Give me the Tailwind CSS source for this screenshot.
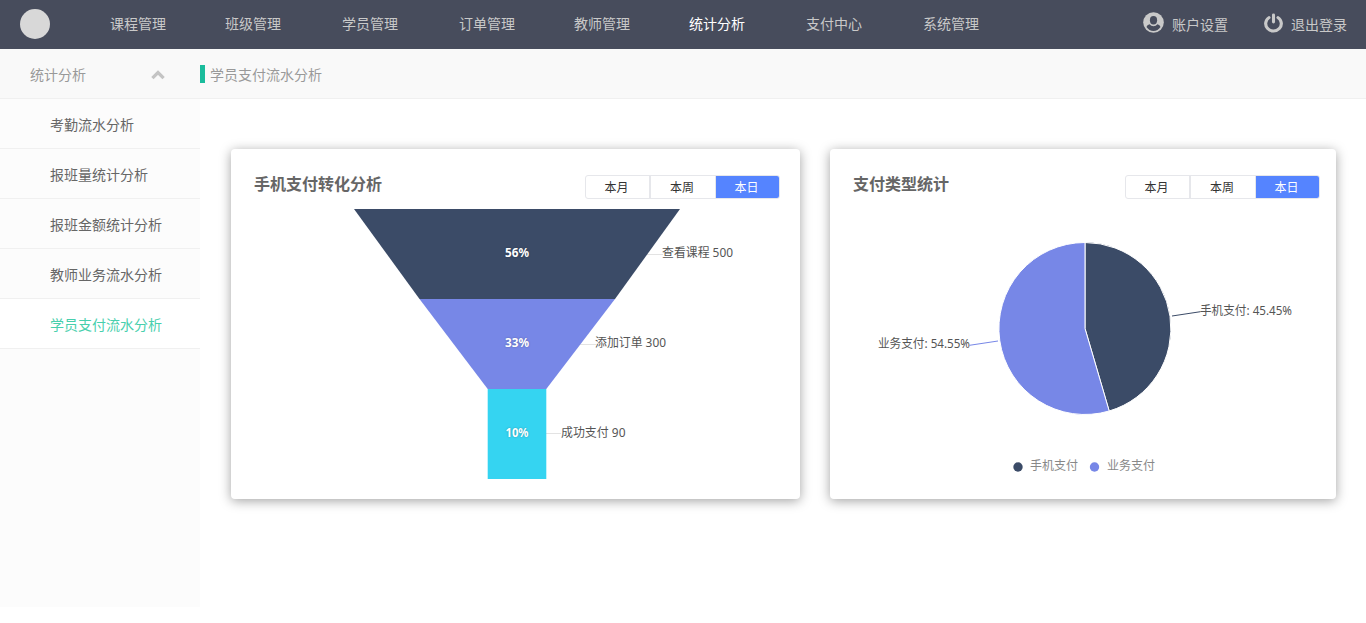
<!DOCTYPE html>
<html lang="zh-CN">
<head>
<meta charset="utf-8">
<title>学员支付流水分析</title>
<script src="https://cdn.jsdelivr.net/npm/@tailwindcss/browser@4"></script>
</head>
<body class="h-[623px] overflow-hidden bg-white font-['Noto_Sans','Noto_Sans_CJK_SC',sans-serif] text-sm text-[#666]">
<header class="flex h-[49px] items-center bg-[#474c5c] text-[#c9c9c9]">
  <div class="mb-px ml-5 size-[30px] rounded-full bg-[#d8d8d8]"></div>
  <nav class="ml-[60px] flex flex-1 pb-[2px] leading-[20px] whitespace-nowrap">
    <a class="w-[115px]">课程管理</a>
    <a class="w-[117px]">班级管理</a>
    <a class="w-[117px]">学员管理</a>
    <a class="w-[115px]">订单管理</a>
    <a class="w-[115px]">教师管理</a>
    <a class="w-[117px] text-white">统计分析</a>
    <a class="w-[117px]">支付中心</a>
    <a>系统管理</a>
  </nav>
  <a class="mr-[36px] flex items-center gap-2">
    <svg class="-mt-[4px] size-[21px]" viewBox="0 0 21 21">
      <circle cx="10.500" cy="10.500" r="10.300" fill="#c9c9c9"/>
      <ellipse cx="10.500" cy="8.300" rx="3.600" ry="4.200" fill="#474c5c"/>
      <path d="M6.600 12.200c1 1.300 2.300 2 3.900 2s2.900-.7 3.900-2c1.700.5 2.700 1.500 3.100 2.900a8.300 8.300 0 0 1-14 0c.4-1.400 1.400-2.400 3.100-2.900z" fill="#474c5c"/>
    </svg>
    <span class="leading-5">账户设置</span>
  </a>
  <a class="mr-[19px] flex items-center gap-2">
    <svg class="-mt-[4px] h-[20px] w-[19px]" viewBox="0 0 18 20" preserveAspectRatio="none" fill="none" stroke="#c9c9c9" stroke-linecap="round">
      <path d="M9 2v7" stroke-width="2.900"/>
      <path d="M4.700 4.600a7.400 7.400 0 1 0 8.600 0" stroke-width="3"/>
    </svg>
    <span class="leading-5">退出登录</span>
  </a>
</header>

<div class="flex h-[50px] items-center border-b border-[#f0f0f0] bg-[#f9f9f9] leading-5 text-[#999]">
  <div class="flex w-[200px] items-center justify-between pt-[2px] pr-[35px] pl-[30px]">
    <span>统计分析</span>
    <svg class="h-[10px] w-[14px]" viewBox="0 0 14 10"><path d="M1.400 8.200 7 2.600l5.600 5.600" fill="none" stroke="#c4c4c4" stroke-width="3.300"/></svg>
  </div>
  <span class="h-[18px] w-[5px] bg-[#1abc9c]"></span>
  <span class="ml-[5px] pt-[2px]">学员支付流水分析</span>
</div>

<div class="flex">
  <aside class="h-[508px] w-[200px] bg-[#fcfcfc] leading-5">
    <a class="flex h-[50px] items-center border-b border-[#f0f0f0] pt-[3px] pl-[50px]">考勤流水分析</a>
    <a class="flex h-[50px] items-center border-b border-[#f0f0f0] pt-[3px] pl-[50px]">报班量统计分析</a>
    <a class="flex h-[50px] items-center border-b border-[#f0f0f0] pt-[3px] pl-[50px]">报班金额统计分析</a>
    <a class="flex h-[50px] items-center border-b border-[#f0f0f0] pt-[3px] pl-[50px]">教师业务流水分析</a>
    <a class="flex h-[50px] items-center border-b border-[#f0f0f0] bg-white pt-[3px] pl-[50px] text-[#48cfad]">学员支付流水分析</a>
  </aside>

  <main class="mt-[50px] ml-[31px] flex gap-[30px]">
    <section class="h-[350px] w-[569px] rounded bg-white shadow-[0_2px_12px_rgba(0,0,0,0.37)]">
      <div class="flex h-[60px] items-start justify-between pr-5 pl-[23px]">
        <h2 class="mt-[23px] text-base leading-6 font-bold">手机支付转化分析</h2>
        <div class="mt-[26px] flex h-6 w-[195px] rounded-[3px] border border-[#e6e7eb] text-xs text-[#333]">
          <button class="w-[65px] border-r-2 border-[#e6e7eb] pt-px pr-[2px]">本月</button>
          <button class="w-[65px] border-r border-[#e6e7eb] pt-px pr-[2px]">本周</button>
          <button class="flex-1 rounded-r-[2px] bg-[#5584ff] pt-px pr-[2px] text-white">本日</button>
        </div>
      </div>
      <svg class="block h-[290px] w-[569px]" viewBox="231 209 569 290" font-size="12" fill="#555">
        <path d="M640 254.500h23M573 344.500h23M546 433.500h15" stroke="#e3e3e3"/>
        <path d="M354 209H680L615 299H419.500z" fill="#3b4b67"/>
        <path d="M419.500 299H615L546.300 389H487.700z" fill="#7787e7"/>
        <path d="M487.700 389h58.600v90h-58.600z" fill="#35d4f1"/>
        <g fill="#fff" font-weight="bold" text-anchor="middle" style="text-shadow:0 0 2px rgba(0,0,0,.3)">
          <text x="517" y="257" textLength="24" lengthAdjust="spacingAndGlyphs">56%</text>
          <text x="517" y="347" textLength="24" lengthAdjust="spacingAndGlyphs">33%</text>
          <text x="517" y="437" textLength="23" lengthAdjust="spacingAndGlyphs">10%</text>
        </g>
        <text x="662" y="257" textLength="71" lengthAdjust="spacingAndGlyphs">查看课程 500</text>
        <text x="595" y="347" textLength="71" lengthAdjust="spacingAndGlyphs">添加订单 300</text>
        <text x="561" y="437" textLength="64.500" lengthAdjust="spacingAndGlyphs">成功支付 90</text>
      </svg>
    </section>

    <section class="h-[350px] w-[506px] rounded bg-white shadow-[0_2px_12px_rgba(0,0,0,0.37)]">
      <div class="flex h-[60px] items-start justify-between pr-4 pl-[23px]">
        <h2 class="mt-[23px] text-base leading-6 font-bold">支付类型统计</h2>
        <div class="mt-[26px] flex h-6 w-[195px] rounded-[3px] border border-[#e6e7eb] text-xs text-[#333]">
          <button class="w-[65px] border-r-2 border-[#e6e7eb] pt-px pr-[2px]">本月</button>
          <button class="w-[65px] border-r border-[#e6e7eb] pt-px pr-[2px]">本周</button>
          <button class="flex-1 rounded-r-[2px] bg-[#5584ff] pt-px pr-[2px] text-white">本日</button>
        </div>
      </div>
      <svg class="block h-[290px] w-[506px]" viewBox="830 209 506 290" font-size="12" fill="#555">
        <g stroke="#fff">
          <path d="M1085 328.500V242.500A86 86 0 0 1 1109.200 411z" fill="#3b4b67"/>
          <path d="M1085 328.500L1109.200 411A86 86 0 1 1 1085 242.500z" fill="#7787e7"/>
        </g>
        <path d="M1172 316l28.500-4.300" stroke="#3b4b67"/>
        <path d="M998 341l-28.500 4.300" stroke="#7787e7"/>
        <text x="1200" y="315" textLength="92" lengthAdjust="spacingAndGlyphs">手机支付: 45.45%</text>
        <text x="878" y="348" textLength="92" lengthAdjust="spacingAndGlyphs">业务支付: 54.55%</text>
        <circle cx="1018" cy="467" r="4.700" fill="#3b4b67"/>
        <circle cx="1094.500" cy="467" r="4.700" fill="#7787e7"/>
        <text x="1030" y="470" fill="#888">手机支付</text>
        <text x="1107" y="470" fill="#888">业务支付</text>
      </svg>
    </section>
  </main>
</div>
</body>
</html>
